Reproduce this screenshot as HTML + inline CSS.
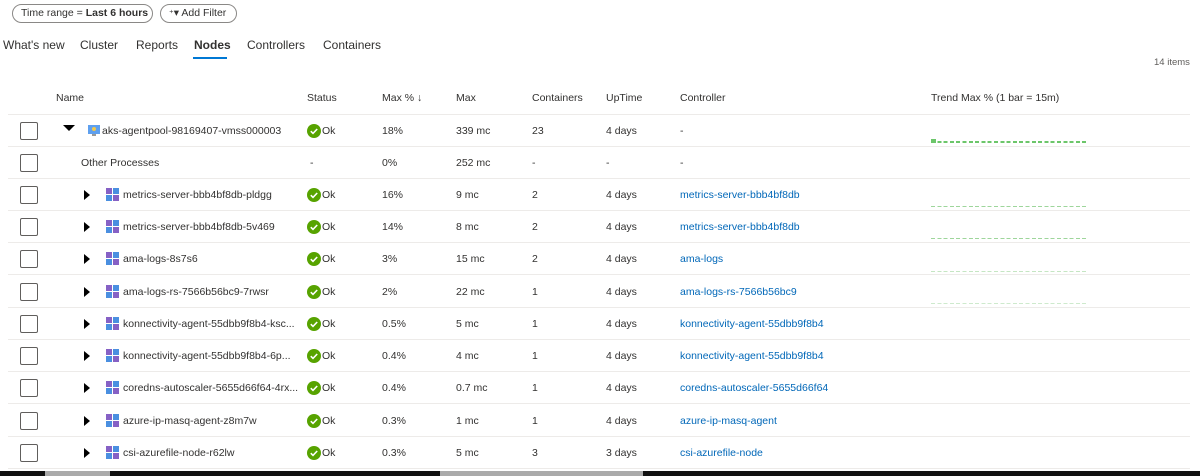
<!DOCTYPE html>
<html><head><style>
*{margin:0;padding:0;box-sizing:border-box}
body{width:1200px;height:476px;overflow:hidden;background:#fff;font-family:"Liberation Sans",sans-serif;color:#323130;position:relative;font-size:11px}
.pill{position:absolute;top:4px;height:19px;border:1px solid #8a8886;border-radius:10px;font-size:10.5px;line-height:17px;padding:0 8px;color:#323130;white-space:nowrap}
.tab{position:absolute;top:38px;font-size:12px;color:#323130}
.abs{position:absolute}
.row{position:absolute;left:8px;width:1182px;height:32px;border-bottom:1px solid #edebe9}
.cell{position:absolute;top:0;line-height:32px;font-size:10.5px;white-space:nowrap}
.cb{position:absolute;left:12px;top:7px;width:18px;height:18px;border:1px solid #605e5c;border-radius:2px}
.arr{position:absolute;left:56px;top:11px;width:0;height:0;border-top:5px solid transparent;border-bottom:5px solid transparent;border-left:6px solid #000}
.ok{position:absolute;left:299px;top:9px;width:14px;height:14px}
.pod{position:absolute;left:98px;top:9px;width:14px;height:14px}
.pod i{position:absolute;width:6px;height:6px}
a{color:#0067b8;text-decoration:none}
.spark{position:absolute;left:923px;width:157px;height:2px;background:repeating-linear-gradient(90deg,#9ed69b 0 4px,transparent 4px 6.3px)}
.hdr{position:absolute;top:92px;font-size:10.5px;color:#323130}
</style></head><body>
<div class="pill" style="left:12px;width:141px">Time range = <b>Last 6 hours</b></div>
<div class="pill" style="left:160px;width:77px;padding-left:8px"><span style="font-size:9px">⁺</span>▾ Add Filter</div>
<div class="tab" style="left:3px">What's new</div>
<div class="tab" style="left:80px">Cluster</div>
<div class="tab" style="left:136px">Reports</div>
<div class="tab" style="left:194px;font-weight:bold">Nodes</div>
<div class="abs" style="left:193px;top:57px;width:34px;height:2px;background:#0078d4"></div>
<div class="tab" style="left:247px">Controllers</div>
<div class="tab" style="left:323px">Containers</div>
<div class="abs" style="left:1154px;top:57px;font-size:9.5px;color:#605e5c">14 items</div>
<div class="hdr" style="left:56px">Name</div>
<div class="hdr" style="left:307px">Status</div>
<div class="hdr" style="left:382px">Max % ↓</div>
<div class="hdr" style="left:456px">Max</div>
<div class="hdr" style="left:532px">Containers</div>
<div class="hdr" style="left:606px">UpTime</div>
<div class="hdr" style="left:680px">Controller</div>
<div class="hdr" style="left:931px">Trend Max % (1 bar = 15m)</div>
<div class="abs" style="left:8px;top:114px;width:1182px;height:1px;background:#edebe9"></div>

<svg width="0" height="0" style="position:absolute"><defs><symbol id="ok" viewBox="0 0 14 14"><circle cx="7" cy="7" r="7" fill="#57a300"/><path d="M3.8 7.2l2.2 2.2 4.2-4.4" fill="none" stroke="#fff" stroke-width="1.6"/></symbol></defs></svg>

<div class="row" style="top:115px">
<div class="cb"></div>
<div class="abs" style="left:55px;top:10px;border-left:6px solid transparent;border-right:6px solid transparent;border-top:6px solid #000"></div>
<svg class="abs" style="left:79px;top:9px" width="14" height="13"><rect x="1" y="1" width="12" height="9" fill="#5ea0ef"/><rect x="5" y="10" width="4" height="2" fill="#999"/><circle cx="7" cy="5" r="2" fill="#f2c94c"/></svg>
<div class="cell" style="left:94px">aks-agentpool-98169407-vmss000003</div>
<svg class="ok"><use href="#ok"/></svg><div class="cell" style="left:314px">Ok</div>
<div class="cell" style="left:374px">18%</div><div class="cell" style="left:448px">339 mc</div>
<div class="cell" style="left:524px">23</div><div class="cell" style="left:598px">4 days</div><div class="cell" style="left:672px">-</div>
<div class="spark" style="top:26px;background:repeating-linear-gradient(90deg,#6cc66a 0 4px,transparent 4px 6.3px)"></div>
<div class="abs" style="left:923px;top:24px;width:5px;height:4px;background:#6cc66a"></div>
</div>
<div class="row" style="top:147px">
<div class="cb"></div>
<div class="cell" style="left:73px">Other Processes</div>
<div class="cell" style="left:302px">-</div>
<div class="cell" style="left:374px">0%</div><div class="cell" style="left:448px">252 mc</div>
<div class="cell" style="left:524px">-</div><div class="cell" style="left:598px">-</div><div class="cell" style="left:672px">-</div>
</div>

<div class="row" style="top:179px"><div class="cb"></div><div class="arr" style="left:76px"></div><div class="pod"><i style="left:0;top:0;background:#8661c5"></i><i style="left:7px;top:0;background:#4a8fe0"></i><i style="left:0;top:7px;background:#4a8fe0"></i><i style="left:7px;top:7px;background:#8661c5"></i></div><div class="cell" style="left:115px">metrics-server-bbb4bf8db-pldgg</div><svg class="ok"><use href="#ok"/></svg><div class="cell" style="left:314px">Ok</div><div class="cell" style="left:374px">16%</div><div class="cell" style="left:448px">9 mc</div><div class="cell" style="left:524px">2</div><div class="cell" style="left:598px">4 days</div><div class="cell" style="left:672px"><a>metrics-server-bbb4bf8db</a></div><div class="spark" style="top:27px;height:1px"></div></div>
<div class="row" style="top:211px"><div class="cb"></div><div class="arr" style="left:76px"></div><div class="pod"><i style="left:0;top:0;background:#8661c5"></i><i style="left:7px;top:0;background:#4a8fe0"></i><i style="left:0;top:7px;background:#4a8fe0"></i><i style="left:7px;top:7px;background:#8661c5"></i></div><div class="cell" style="left:115px">metrics-server-bbb4bf8db-5v469</div><svg class="ok"><use href="#ok"/></svg><div class="cell" style="left:314px">Ok</div><div class="cell" style="left:374px">14%</div><div class="cell" style="left:448px">8 mc</div><div class="cell" style="left:524px">2</div><div class="cell" style="left:598px">4 days</div><div class="cell" style="left:672px"><a>metrics-server-bbb4bf8db</a></div><div class="spark" style="top:27px;height:1px"></div></div>
<div class="row" style="top:243px"><div class="cb"></div><div class="arr" style="left:76px"></div><div class="pod"><i style="left:0;top:0;background:#8661c5"></i><i style="left:7px;top:0;background:#4a8fe0"></i><i style="left:0;top:7px;background:#4a8fe0"></i><i style="left:7px;top:7px;background:#8661c5"></i></div><div class="cell" style="left:115px">ama-logs-8s7s6</div><svg class="ok"><use href="#ok"/></svg><div class="cell" style="left:314px">Ok</div><div class="cell" style="left:374px">3%</div><div class="cell" style="left:448px">15 mc</div><div class="cell" style="left:524px">2</div><div class="cell" style="left:598px">4 days</div><div class="cell" style="left:672px"><a>ama-logs</a></div><div class="spark" style="top:28px;height:1px;opacity:.6"></div></div>
<div class="row" style="top:276px"><div class="cb"></div><div class="arr" style="left:76px"></div><div class="pod"><i style="left:0;top:0;background:#8661c5"></i><i style="left:7px;top:0;background:#4a8fe0"></i><i style="left:0;top:7px;background:#4a8fe0"></i><i style="left:7px;top:7px;background:#8661c5"></i></div><div class="cell" style="left:115px">ama-logs-rs-7566b56bc9-7rwsr</div><svg class="ok"><use href="#ok"/></svg><div class="cell" style="left:314px">Ok</div><div class="cell" style="left:374px">2%</div><div class="cell" style="left:448px">22 mc</div><div class="cell" style="left:524px">1</div><div class="cell" style="left:598px">4 days</div><div class="cell" style="left:672px"><a>ama-logs-rs-7566b56bc9</a></div><div class="spark" style="top:27px;height:1px;opacity:.5"></div></div>
<div class="row" style="top:308px"><div class="cb"></div><div class="arr" style="left:76px"></div><div class="pod"><i style="left:0;top:0;background:#8661c5"></i><i style="left:7px;top:0;background:#4a8fe0"></i><i style="left:0;top:7px;background:#4a8fe0"></i><i style="left:7px;top:7px;background:#8661c5"></i></div><div class="cell" style="left:115px">konnectivity-agent-55dbb9f8b4-ksc...</div><svg class="ok"><use href="#ok"/></svg><div class="cell" style="left:314px">Ok</div><div class="cell" style="left:374px">0.5%</div><div class="cell" style="left:448px">5 mc</div><div class="cell" style="left:524px">1</div><div class="cell" style="left:598px">4 days</div><div class="cell" style="left:672px"><a>konnectivity-agent-55dbb9f8b4</a></div></div>
<div class="row" style="top:340px"><div class="cb"></div><div class="arr" style="left:76px"></div><div class="pod"><i style="left:0;top:0;background:#8661c5"></i><i style="left:7px;top:0;background:#4a8fe0"></i><i style="left:0;top:7px;background:#4a8fe0"></i><i style="left:7px;top:7px;background:#8661c5"></i></div><div class="cell" style="left:115px">konnectivity-agent-55dbb9f8b4-6p...</div><svg class="ok"><use href="#ok"/></svg><div class="cell" style="left:314px">Ok</div><div class="cell" style="left:374px">0.4%</div><div class="cell" style="left:448px">4 mc</div><div class="cell" style="left:524px">1</div><div class="cell" style="left:598px">4 days</div><div class="cell" style="left:672px"><a>konnectivity-agent-55dbb9f8b4</a></div></div>
<div class="row" style="top:372px"><div class="cb"></div><div class="arr" style="left:76px"></div><div class="pod"><i style="left:0;top:0;background:#8661c5"></i><i style="left:7px;top:0;background:#4a8fe0"></i><i style="left:0;top:7px;background:#4a8fe0"></i><i style="left:7px;top:7px;background:#8661c5"></i></div><div class="cell" style="left:115px">coredns-autoscaler-5655d66f64-4rx...</div><svg class="ok"><use href="#ok"/></svg><div class="cell" style="left:314px">Ok</div><div class="cell" style="left:374px">0.4%</div><div class="cell" style="left:448px">0.7 mc</div><div class="cell" style="left:524px">1</div><div class="cell" style="left:598px">4 days</div><div class="cell" style="left:672px"><a>coredns-autoscaler-5655d66f64</a></div></div>
<div class="row" style="top:405px"><div class="cb"></div><div class="arr" style="left:76px"></div><div class="pod"><i style="left:0;top:0;background:#8661c5"></i><i style="left:7px;top:0;background:#4a8fe0"></i><i style="left:0;top:7px;background:#4a8fe0"></i><i style="left:7px;top:7px;background:#8661c5"></i></div><div class="cell" style="left:115px">azure-ip-masq-agent-z8m7w</div><svg class="ok"><use href="#ok"/></svg><div class="cell" style="left:314px">Ok</div><div class="cell" style="left:374px">0.3%</div><div class="cell" style="left:448px">1 mc</div><div class="cell" style="left:524px">1</div><div class="cell" style="left:598px">4 days</div><div class="cell" style="left:672px"><a>azure-ip-masq-agent</a></div></div>
<div class="row" style="top:437px"><div class="cb"></div><div class="arr" style="left:76px"></div><div class="pod"><i style="left:0;top:0;background:#8661c5"></i><i style="left:7px;top:0;background:#4a8fe0"></i><i style="left:0;top:7px;background:#4a8fe0"></i><i style="left:7px;top:7px;background:#8661c5"></i></div><div class="cell" style="left:115px">csi-azurefile-node-r62lw</div><svg class="ok"><use href="#ok"/></svg><div class="cell" style="left:314px">Ok</div><div class="cell" style="left:374px">0.3%</div><div class="cell" style="left:448px">5 mc</div><div class="cell" style="left:524px">3</div><div class="cell" style="left:598px">3 days</div><div class="cell" style="left:672px"><a>csi-azurefile-node</a></div></div>

<div class="abs" style="left:0;top:471px;width:1200px;height:5px;background:#111"></div>
<div class="abs" style="left:45px;top:471px;width:65px;height:5px;background:#aaa"></div>
<div class="abs" style="left:440px;top:471px;width:203px;height:5px;background:#aaa"></div>
</body></html>
